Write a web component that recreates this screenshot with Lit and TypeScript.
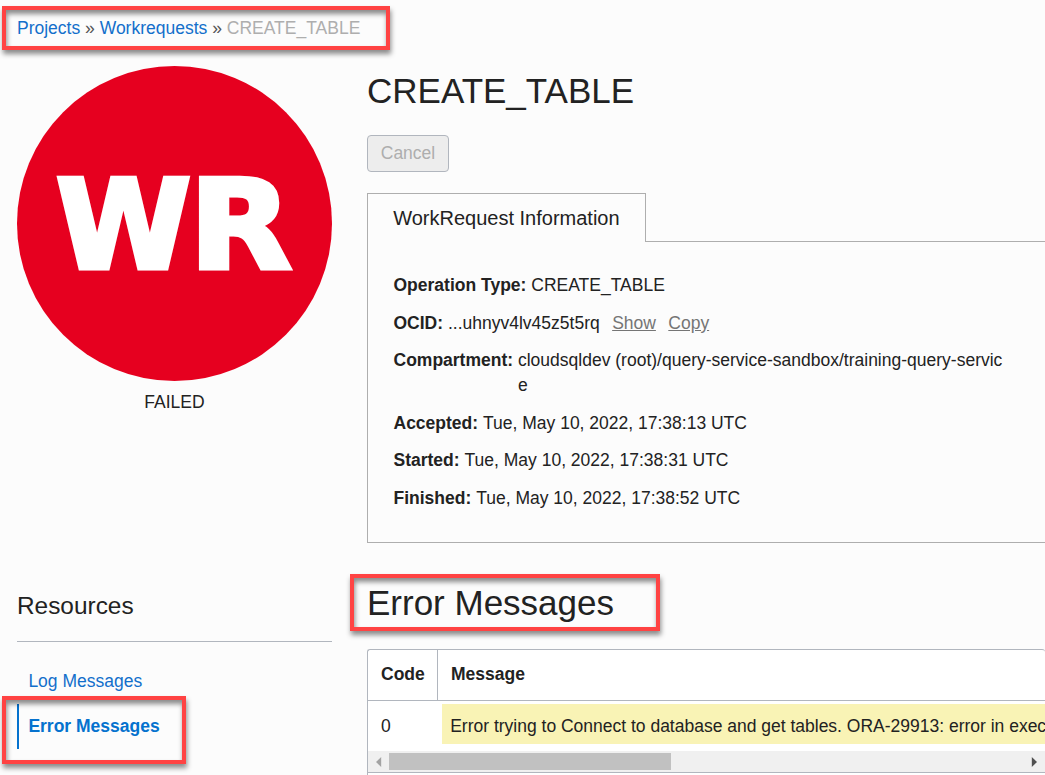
import { LitElement, html, css } from "lit";
import { customElement } from "lit/decorators.js";

@customElement("status-badge")
class StatusBadge extends LitElement {
  static styles = css`
    :host { display: block; }
    .disc { display: block; width: 315px; height: 315px; }
    .letters { font-family: "DejaVu Sans", sans-serif; font-weight: 700; font-size: 122.6px; fill: #fff; stroke: #fff; stroke-width: 5; stroke-miterlimit: 10; }
    .status { height: 25px; margin-top: 8.5px; line-height: 25px; text-align: center; }
  `;
  render() {
    return html`
      <svg class="disc" viewBox="0 0 315 315">
        <circle cx="157.5" cy="157.5" r="157.5" fill="#e6001f"></circle>
        <g class="letters">
          <text x="39" y="201.6" textLength="135" lengthAdjust="spacingAndGlyphs">W</text>
          <text x="172.5" y="201.6" textLength="102" lengthAdjust="spacingAndGlyphs">R</text>
        </g>
      </svg>
      <div class="status">FAILED</div>
    `;
  }
}

@customElement("request-details")
class RequestDetails extends LitElement {
  static styles = css`
    :host { display: block; }
    .tabs { display: flex; height: 49px; }
    .tab { box-sizing: border-box; width: 279px; padding-left: 25.2px; border: 1px solid #aeaeae; border-bottom: 0; font-size: 20px; line-height: 48px; white-space: nowrap; }
    .rest { flex: 1; border-bottom: 1px solid #aeaeae; }
    .panel { box-sizing: border-box; height: 301px; padding: 31.2px 37px 0 25.5px; border-left: 1px solid #aeaeae; border-bottom: 1px solid #aeaeae; }
    .row { display: flex; gap: 4.9px; margin-bottom: 12.5px; line-height: 25px; }
    .name { flex: none; font-weight: 700; }
    .value { word-break: break-all; }
    .action { margin-left: 7.5px; color: #757575; text-decoration: underline; }
  `;
  render() {
    const row = (name: string, value: unknown) =>
      html`<div class="row"><span class="name">${name}:</span><span class="value">${value}</span></div>`;
    return html`
      <div class="tabs"><div class="tab">WorkRequest Information</div><div class="rest"></div></div>
      <div class="panel">
        ${row("Operation Type", "CREATE_TABLE")}
        <div class="row"><span class="name">OCID:</span><span class="value">...uhnyv4lv45z5t5rq</span><a class="action">Show</a><a class="action">Copy</a></div>
        ${row("Compartment", "cloudsqldev (root)/query-service-sandbox/training-query-service")}
        ${row("Accepted", "Tue, May 10, 2022, 17:38:13 UTC")}
        ${row("Started", "Tue, May 10, 2022, 17:38:31 UTC")}
        ${row("Finished", "Tue, May 10, 2022, 17:38:52 UTC")}
      </div>
    `;
  }
}

@customElement("error-table")
class ErrorTable extends LitElement {
  static styles = css`
    :host { display: block; }
    .table { box-sizing: border-box; height: 130px; border: 1px solid #b1b6be; border-right: 0; border-bottom: 0; border-radius: 3px 3px 0 0; background: #fff; overflow: hidden; }
    .head, .body { display: grid; grid-template-columns: 69px 1fr; }
    .head { height: 50px; border-bottom: 1px solid #b1b6be; font-weight: 700; line-height: 49px; }
    .cell { padding-left: 13px; }
    .head .message { border-left: 1px solid #b1b6be; }
    .body { height: 50px; line-height: 50px; }
    .body .message { height: 40px; margin: 3px 0 0 5px; padding-left: 8.2px; background: #f9f3b5; line-height: 44px; letter-spacing: -0.005px; white-space: nowrap; }
    .scroll { display: flex; align-items: center; box-sizing: border-box; height: 22px; padding: 0 8px; border-bottom: 1px solid #b1b6be; background: #f0f0f0; }
    .arrow { flex: none; width: 6px; height: 10px; }
    .thumb { width: 282px; height: 17px; margin-left: 7px; margin-right: auto; background: #c1c1c1; }
  `;
  render() {
    return html`
      <div class="table">
        <div class="head"><div class="cell">Code</div><div class="cell message">Message</div></div>
        <div class="body">
          <div class="cell">0</div>
          <div class="message">Error trying to Connect to database and get tables. ORA-29913: error in exec</div>
        </div>
        <div class="scroll">
          <svg class="arrow" viewBox="0 0 6 10"><path d="M5.2 0V10L0 5z" fill="#a3a3a3"></path></svg>
          <div class="thumb"></div>
          <svg class="arrow" viewBox="0 0 6 10"><path d="M.8 0V10L6 5z" fill="#505050"></path></svg>
        </div>
      </div>
    `;
  }
}

@customElement("app-root")
class AppRoot extends LitElement {
  static styles = css`
    :host { display: block; box-sizing: border-box; height: 775px; padding: 15.5px 0 0 17px; overflow: hidden; background: #fcfcfc; color: #222; font: 17.5px "Liberation Sans", Arial, sans-serif; }
    .crumbs { position: relative; height: 25px; line-height: 25px; color: #555; }
    .link { color: #136fcb; }
    .current { color: #aeaeae; }
    .columns { display: grid; grid-template-columns: 315px minmax(0, 1fr); column-gap: 35px; margin-top: 25.5px; }
    .resources { box-sizing: border-box; height: 51px; margin: 176.5px 0 0; border-bottom: 1px solid #b1b6be; font-size: 24.4px; font-weight: 400; line-height: 30px; }
    .nav { margin-top: 17px; }
    .item { position: relative; box-sizing: border-box; height: 45px; padding-left: 11.4px; line-height: 44px; color: #136fcb; }
    .active { padding-left: 9.4px; border-left: 2px solid #0572ce; color: #0572ce; font-weight: 700; }
    .title { position: relative; height: 44px; margin: 0; font-size: 35px; font-weight: 400; line-height: 44px; }
    .first { margin-top: 3px; }
    .cancel { display: block; box-sizing: border-box; width: 82px; height: 37px; margin: 22px 0 21px; padding: 0; border: 1px solid #b1b6be; border-radius: 4px; background: #ededed; color: #aeaeae; font: inherit; }
    .second { margin: 38px 0 24px; }
    .mark { position: absolute; box-sizing: border-box; border: 4px solid #ff4343; box-shadow: 1px 4px 5px rgba(0, 0, 0, .45), inset 1px 4px 5px rgba(0, 0, 0, .45); }
    .m1 { left: -15px; top: -9.5px; width: 388px; height: 44px; }
    .m2 { left: -17px; top: -7px; width: 310px; height: 57px; }
    .m3 { left: -17px; top: -8px; width: 184px; height: 68px; }
  `;
  render() {
    return html`
      <nav class="crumbs">
        <a class="link">Projects</a> » <a class="link">Workrequests</a> » <span class="current">CREATE_TABLE</span>
        <span class="mark m1"></span>
      </nav>
      <div class="columns">
        <aside>
          <status-badge></status-badge>
          <h3 class="resources">Resources</h3>
          <div class="nav">
            <div class="item">Log Messages</div>
            <div class="item active">Error Messages<span class="mark m3"></span></div>
          </div>
        </aside>
        <main>
          <h1 class="title first">CREATE_TABLE</h1>
          <button class="cancel" disabled>Cancel</button>
          <request-details></request-details>
          <h2 class="title second">Error Messages<span class="mark m2"></span></h2>
          <error-table></error-table>
        </main>
      </div>
    `;
  }
}
